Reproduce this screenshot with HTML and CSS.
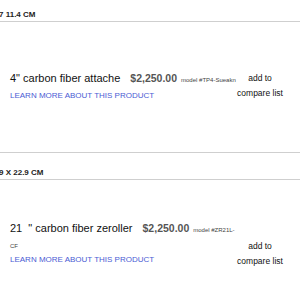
FILE: index.html
```html
<!DOCTYPE html>
<html>
<head>
<meta charset="utf-8">
<link rel="stylesheet" href="styles.css">
</head>
<body>
<div class="page">
  <h2 class="size-heading">7 11.4 CM</h2>
  <div class="product">
    <div class="info">
      <p class="title-line"><span class="name">4" carbon fiber attache</span><span class="price">$2,250.00</span><span class="model">model #TP4-Sueakn</span></p>
      <a class="learn" href="#">LEARN MORE ABOUT THIS PRODUCT</a>
    </div>
    <div class="compare">add to<br>compare list</div>
  </div>
  <h2 class="size-heading size-heading--second">9 X 22.9 CM</h2>
  <div class="product product--second">
    <div class="info">
      <p class="title-line"><span class="name">21&nbsp; " carbon fiber zeroller</span><span class="price">$2,250.00</span><span class="model">model #ZR21L-CF</span></p>
      <a class="learn" href="#">LEARN MORE ABOUT THIS PRODUCT</a>
    </div>
    <div class="compare">add to<br>compare list</div>
  </div>
</div>
</body>
</html>
```

FILE: styles.css
```css
html, body {
  margin: 0;
  padding: 0;
  background: #fff;
}
body {
  font-family: "Liberation Sans", Arial, Helvetica, sans-serif;
  color: #111;
  overflow: hidden;
}
.page {
  width: 300px;
}
.size-heading {
  margin: 10px 0 0 0;
  padding: 0 0 1px 0;
  font-size: 8px;
  line-height: 10px;
  font-weight: bold;
  color: #222;
  text-indent: -1px;
  border-bottom: 1px solid #cfcfcf;
}
.size-heading--second {
  margin-top: 15px;
}
.product {
  display: flex;
  align-items: center;
  padding: 47px 0 51px 10px;
  border-bottom: 1px solid #cfcfcf;
}
.product--second {
  padding-top: 35px;
  border-bottom: none;
}
.info {
  flex: none;
  width: 227px;
}
.title-line {
  margin: 0;
  font-size: 11px;
  line-height: 16px;
  color: #111;
}
.price {
  margin-left: 10px;
  font-size: 10.5px;
  line-height: 1;
  font-weight: bold;
  color: #555;
}
.model {
  margin-left: 4px;
  font-size: 6px;
  line-height: 1;
  color: #444;
}
.learn {
  display: block;
  margin-top: 5px;
  font-size: 8px;
  line-height: 10px;
  color: #4a5bd4;
  text-decoration: none;
}
.product--second .learn {
  margin-top: 3px;
}
.compare {
  flex: none;
  width: 46px;
  text-align: center;
  font-size: 8.5px;
  line-height: 15px;
  color: #111;
  padding-top: 2px;
}
.product--second .compare {
  align-self: flex-start;
  margin-top: 22px;
}
```
